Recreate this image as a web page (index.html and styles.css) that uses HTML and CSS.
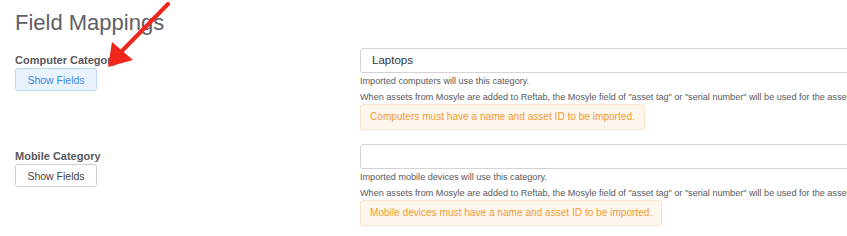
FILE: index.html
```html
<!DOCTYPE html>
<html lang="en">
<head>
    <meta charset="UTF-8">
    <meta name="viewport" content="width=device-width, initial-scale=1.0">
    <title>Field Mappings</title>
    <link rel="stylesheet" href="styles.css">
</head>
<body>
    <div class="page">
        <h2 class="title">Field Mappings</h2>

        <div class="mapping">
            <div class="mapping-label">
                <div class="label">Computer Category</div>
                <button class="btn btn-active">Show Fields</button>
            </div>
            <div class="mapping-field">
                <div class="select">Laptops</div>
                <p class="help">Imported computers will use this category.</p>
                <p class="help">When assets from Mosyle are added to Reftab, the Mosyle field of "asset tag" or "serial number" will be used for the asset ID.</p>
                <div class="alert">Computers must have a name and asset ID to be imported.</div>
            </div>
        </div>

        <div class="mapping mapping-second">
            <div class="mapping-label">
                <div class="label">Mobile Category</div>
                <button class="btn">Show Fields</button>
            </div>
            <div class="mapping-field">
                <div class="select"></div>
                <p class="help">Imported mobile devices will use this category.</p>
                <p class="help">When assets from Mosyle are added to Reftab, the Mosyle field of "asset tag" or "serial number" will be used for the asset ID.</p>
                <div class="alert">Mobile devices must have a name and asset ID to be imported.</div>
            </div>
        </div>

        <!-- annotation arrow drawn over the page -->
        <svg class="arrow" width="80" height="75" viewBox="0 0 80 75">
            <line x1="75" y1="2" x2="26" y2="52" stroke="#f0261c" stroke-width="4" stroke-linecap="round"/>
            <polygon points="15,65 19,40 40,58" fill="#f0261c"/>
        </svg>
    </div>
</body>
</html>
```

FILE: styles.css
```css
body {
    margin: 0;
    font-family: "Liberation Sans", Arial, sans-serif;
    background-color: #ffffff;
    color: #555;
    overflow: hidden;
}

.page {
    position: relative;
    padding: 10px 0 0 15px;
}

.title {
    margin: 0 0 12px 0;
    font-size: 22px;
    font-weight: normal;
    line-height: 26px;
    color: #606064;
}

.mapping {
    display: flex;
}

.mapping-second {
    margin-top: 14px;
}

.mapping-label {
    width: 345px;
    flex-shrink: 0;
    padding-top: 6px;
}

.label {
    font-size: 11px;
    font-weight: bold;
    line-height: 13px;
    color: #58585c;
    margin-bottom: 1px;
}

.btn {
    display: block;
    width: 82px;
    height: 23px;
    padding: 0;
    font-family: inherit;
    font-size: 10.5px;
    color: #444;
    background-color: #ffffff;
    border: 1px solid #cfcfd3;
    border-radius: 3px;
}

.btn-active {
    color: #3a8be3;
    background-color: #e9f3fe;
    border-color: #bcd9f7;
}

.mapping-field {
    width: 600px;
    flex-shrink: 0;
}

.select {
    box-sizing: border-box;
    height: 25px;
    padding: 0 11px;
    border: 1px solid #d3d3d6;
    border-radius: 3px;
    font-size: 11.5px;
    line-height: 23px;
    color: #333;
}

.help {
    margin: 3px 0 0 0;
    font-size: 9.1px;
    line-height: 11px;
    color: #58585c;
    white-space: nowrap;
}

.help + .help {
    margin-top: 5px;
}

.alert {
    display: inline-block;
    margin-top: 1px;
    padding: 0 9px;
    height: 26px;
    box-sizing: border-box;
    line-height: 24px;
    font-size: 10.1px;
    color: #f09c34;
    background-color: #fdf6ec;
    border: 1px solid #fae6cb;
    border-radius: 3px;
}

.arrow {
    position: absolute;
    left: 93px;
    top: 2px;
}
```
